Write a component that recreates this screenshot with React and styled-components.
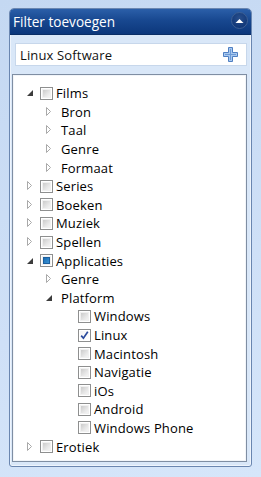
import React from "react";
import styled, { createGlobalStyle } from "styled-components";

const Global = createGlobalStyle`
  html, body { margin: 0; padding: 0; }
  body {
    width: 261px;
    height: 477px;
    overflow: hidden;
    background: linear-gradient(160deg, #c4d8f2 0%, #cfe0f7 60%, #d6e6fa 100%);
    font-family: "Open Sans", "Noto Sans", sans-serif;
  }
`;

const Page = styled.div`
  padding: 8px 9px 10px 9px;
  box-sizing: border-box;
  height: 477px;
`;

const Panel = styled.section`
  height: 459px;
  box-sizing: border-box;
  border: 1px solid #6a86b0;
  border-radius: 5px 5px 3px 3px;
  background: #d9e7f8;
  display: flex;
  flex-direction: column;
  box-shadow: inset 0 0 0 1px #eef4fc;
  overflow: hidden;
`;

const Header = styled.header`
  height: 25px;
  flex: none;
  display: flex;
  align-items: center;
  justify-content: space-between;
  padding: 0 3px 0 3px;
  background: linear-gradient(180deg, #2b5fa9 0%, #184890 45%, #0c377b 100%);
  border-bottom: 1px solid #0a2e66;
`;

const Title = styled.h1`
  margin: 0;
  font-family: "Open Sans", "Noto Sans", sans-serif;
  font-weight: 400;
  font-size: 13.6px;
  letter-spacing: 0;
  color: #ffffff;
`;

const CollapseButton = styled.button`
  width: 17px;
  height: 17px;
  padding: 0;
  border-radius: 50%;
  border: 1px solid #3d5f93;
  background: radial-gradient(circle at 50% 35%, #294f8c 0%, #12397a 70%);
  display: flex;
  align-items: center;
  justify-content: center;
  margin-top: -2px;
`;

const Body = styled.div`
  flex: 1;
  display: flex;
  flex-direction: column;
  padding: 8px 4px 4px 2px;
  gap: 8px;
  min-height: 0;
`;

const SearchBox = styled.div`
  height: 23px;
  box-sizing: border-box;
  margin: 0 0 0 3px;
  background: #ffffff;
  border: 1px solid #c7d7eb;
  display: flex;
  align-items: center;
  justify-content: space-between;
  padding: 0 8px 0 4px;
`;

const SearchText = styled.span`
  font-size: 13px;
  letter-spacing: 0.15px;
  color: #111;
`;

const Tree = styled.div`
  flex: 1;
  background: #ffffff;
  border: 1px solid #7f8ea3;
  box-shadow: inset 0 0 0 1px #f2f5f9;
  padding: 9px 0 0 9px;
  box-sizing: border-box;
`;

const Row = styled.div`
  height: 18.6px;
  display: flex;
  align-items: center;
  padding-left: ${(p) => p.$level * 19}px;
`;

const Expander = styled.span`
  width: 16px;
  height: 16px;
  flex: none;
  display: flex;
  align-items: center;
  justify-content: center;
`;

const Box = styled.span`
  width: 13px;
  height: 13px;
  box-sizing: border-box;
  flex: none;
  margin: 0 3px 0 2px;
  border: 1px solid #8e8f8f;
  background: #fff;
  padding: 1px;
  display: flex;
`;

const BoxInner = styled.span`
  flex: 1;
  display: flex;
  align-items: center;
  justify-content: center;
  background: ${(p) =>
    p.$state === "checked"
      ? "linear-gradient(135deg, #f4f4f4, #ffffff)"
      : "linear-gradient(135deg, #cbcbcb 0%, #e6e6e6 60%, #f4f4f4 100%)"};
  border: ${(p) => (p.$state === "checked" ? "none" : "1px solid #f0f0f0")};
`;

const Indeterminate = styled.span`
  width: 7px;
  height: 7px;
  box-sizing: border-box;
  border: 1px solid #1c5f9e;
  background: linear-gradient(135deg, #1b6db3 0%, #3a93d6 100%);
`;

const Label = styled.span`
  font-size: 13px;
  letter-spacing: 0.15px;
  color: #000;
  white-space: nowrap;
  padding-left: ${(p) => (p.$plain ? 4 : 0)}px;
  line-height: 18px;
`;

const ExpandedArrow = () => (
  <svg width="16" height="16" viewBox="0 0 16 16">
    <path d="M11 5 L11 11 L5 11 Z" fill="#3c3c3c" />
  </svg>
);

const CollapsedArrow = () => (
  <svg width="16" height="16" viewBox="0 0 16 16">
    <path d="M5.5 3.5 L9.5 7.5 L5.5 11.5 Z" fill="#fff" stroke="#a9a9a9" strokeWidth="1" />
  </svg>
);

const UpIcon = () => (
  <svg width="9" height="6" viewBox="0 0 9 6">
    <path d="M0.5 5 L4.5 1 L8.5 5 Z" fill="#ffffff" />
  </svg>
);

const PlusIcon = () => (
  <svg width="15" height="15" viewBox="0 0 15 15">
    <path
      d="M5.5 0.5 H9.5 V5.5 H14.5 V9.5 H9.5 V14.5 H5.5 V9.5 H0.5 V5.5 H5.5 Z"
      fill="#a9c9ef"
      stroke="#4f7fc2"
      strokeWidth="1"
    />
    <path d="M7.5 2 V13 M2 7.5 H13" stroke="#6d9ad6" strokeWidth="1" />
  </svg>
);

const Check = () => (
  <svg width="9" height="9" viewBox="0 0 9 9">
    <path d="M1.2 4.6 L3.4 7.2 L7.8 0.8" fill="none" stroke="#2a4a9c" strokeWidth="1.7" />
  </svg>
);

const CheckBox = ({ state }) => (
  <Box>
    <BoxInner $state={state}>
      {state === "checked" && <Check />}
      {state === "partial" && <Indeterminate />}
    </BoxInner>
  </Box>
);

const rows = [
  { t: "Films", l: 0, e: "open", cb: "off" },
  { t: "Bron", l: 1, e: "closed" },
  { t: "Taal", l: 1, e: "closed" },
  { t: "Genre", l: 1, e: "closed" },
  { t: "Formaat", l: 1, e: "closed" },
  { t: "Series", l: 0, e: "closed", cb: "off" },
  { t: "Boeken", l: 0, e: "closed", cb: "off" },
  { t: "Muziek", l: 0, e: "closed", cb: "off" },
  { t: "Spellen", l: 0, e: "closed", cb: "off" },
  { t: "Applicaties", l: 0, e: "open", cb: "partial" },
  { t: "Genre", l: 1, e: "closed" },
  { t: "Platform", l: 1, e: "open" },
  { t: "Windows", l: 2, e: "none", cb: "off" },
  { t: "Linux", l: 2, e: "none", cb: "checked" },
  { t: "Macintosh", l: 2, e: "none", cb: "off" },
  { t: "Navigatie", l: 2, e: "none", cb: "off" },
  { t: "iOs", l: 2, e: "none", cb: "off" },
  { t: "Android", l: 2, e: "none", cb: "off" },
  { t: "Windows Phone", l: 2, e: "none", cb: "off" },
  { t: "Erotiek", l: 0, e: "closed", cb: "off" },
];

export default function App() {
  return (
    <>
      <Global />
      <Page>
        <Panel>
          <Header>
            <Title>Filter toevoegen</Title>
            <CollapseButton aria-label="Inklappen">
              <UpIcon />
            </CollapseButton>
          </Header>
          <Body>
            <SearchBox>
              <SearchText>Linux Software</SearchText>
              <PlusIcon />
            </SearchBox>
            <Tree>
              {rows.map((r, i) => (
                <Row key={i} $level={r.l}>
                  <Expander>
                    {r.e === "open" && <ExpandedArrow />}
                    {r.e === "closed" && <CollapsedArrow />}
                  </Expander>
                  {r.cb && <CheckBox state={r.cb} />}
                  <Label $plain={!r.cb}>{r.t}</Label>
                </Row>
              ))}
            </Tree>
          </Body>
        </Panel>
      </Page>
    </>
  );
}
